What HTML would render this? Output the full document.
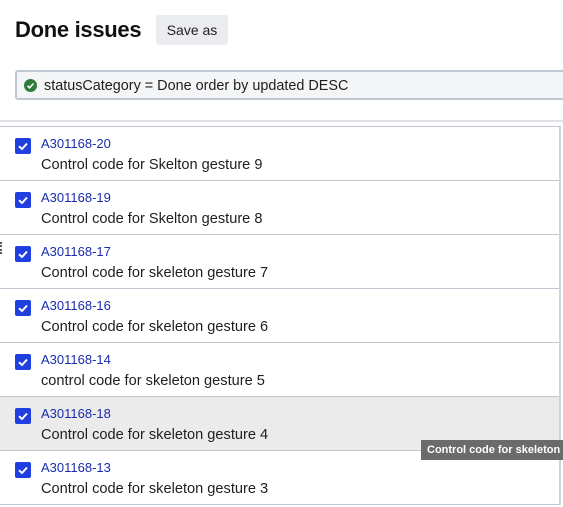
<!DOCTYPE html>
<html><head><style>
body{margin:0;width:563px;height:507px;overflow:hidden;background:#fff;font-family:"Liberation Sans",sans-serif;position:relative}
.h{position:absolute;left:15px;top:17px;font-size:22px;font-weight:bold;color:#111;letter-spacing:-0.3px}
.btn{position:absolute;left:156px;top:15px;width:72px;height:30px;background:#ebecf0;border-radius:3px;font-size:14px;color:#222;line-height:30px;text-align:center}
.q{position:absolute;left:15px;top:70px;width:560px;height:26px;background:#f4f5f7;border:2px solid #c1c7d0;border-radius:3px;box-sizing:content-box}
.q span{position:absolute;left:27px;top:6px;font-size:14.4px;color:#1e1e1e}
.q i{position:absolute;left:7px;top:7px;width:13px;height:13px;border-radius:50%;background:#2e7d3a}
.l1{position:absolute;left:0;top:120px;width:563px;height:2px;background:#dfe1e6}
.list{position:absolute;left:0;top:126px;width:559px;border-top:1px solid #c1c7d0;border-right:2px solid #d0d2d6}
.r{height:53px;border-bottom:1px solid #c1c7d0;position:relative}
.r.hv{background:#ebebeb}
.cb{position:absolute;left:15px;top:11px;width:16px;height:16px;background:#1f3fe0;border-radius:2px}
.k{position:absolute;left:41px;top:9px;font-size:13px;color:#1a2cad}
.s{position:absolute;left:41px;top:30px;font-size:14.6px;color:#1e1e1e}
.tip{position:absolute;left:421px;top:440px;width:150px;height:20px;background:#6b6b6b;color:#fff;font-size:11px;font-weight:bold;line-height:20px;padding-left:6px;box-sizing:border-box;white-space:nowrap;overflow:hidden}
</style></head><body>
<div class="h">Done issues</div>
<div class="btn">Save as</div>
<div class="q"><i><svg width="13" height="13" viewBox="0 0 13 13"><path d="M3.5 6.8l2 2 4-4.3" stroke="#fff" stroke-width="1.6" fill="none"/></svg></i><span>statusCategory = Done order by updated DESC</span></div>
<div class="l1"></div>
<div style="position:absolute;left:0;top:242px;width:2px;height:12px;border-left:2px dotted #555"></div>
<div class="list">
<div class="r"><div class="cb"><svg width="16" height="16"><path d="M4 8.3l3 2.7 5-5.5" stroke="#fff" stroke-width="2" fill="none"/></svg></div><div class="k">A301168-20</div><div class="s">Control code for Skelton gesture 9</div></div>
<div class="r"><div class="cb"><svg width="16" height="16"><path d="M4 8.3l3 2.7 5-5.5" stroke="#fff" stroke-width="2" fill="none"/></svg></div><div class="k">A301168-19</div><div class="s">Control code for Skelton gesture 8</div></div>
<div class="r"><div class="cb"><svg width="16" height="16"><path d="M4 8.3l3 2.7 5-5.5" stroke="#fff" stroke-width="2" fill="none"/></svg></div><div class="k">A301168-17</div><div class="s">Control code for skeleton gesture 7</div></div>
<div class="r"><div class="cb"><svg width="16" height="16"><path d="M4 8.3l3 2.7 5-5.5" stroke="#fff" stroke-width="2" fill="none"/></svg></div><div class="k">A301168-16</div><div class="s">Control code for skeleton gesture 6</div></div>
<div class="r"><div class="cb"><svg width="16" height="16"><path d="M4 8.3l3 2.7 5-5.5" stroke="#fff" stroke-width="2" fill="none"/></svg></div><div class="k">A301168-14</div><div class="s">control code for skeleton gesture 5</div></div>
<div class="r hv"><div class="cb"><svg width="16" height="16"><path d="M4 8.3l3 2.7 5-5.5" stroke="#fff" stroke-width="2" fill="none"/></svg></div><div class="k">A301168-18</div><div class="s">Control code for skeleton gesture 4</div></div>
<div class="r"><div class="cb"><svg width="16" height="16"><path d="M4 8.3l3 2.7 5-5.5" stroke="#fff" stroke-width="2" fill="none"/></svg></div><div class="k">A301168-13</div><div class="s">Control code for skeleton gesture 3</div></div>
</div>
<div class="tip">Control code for skeleton</div>
</body></html>
